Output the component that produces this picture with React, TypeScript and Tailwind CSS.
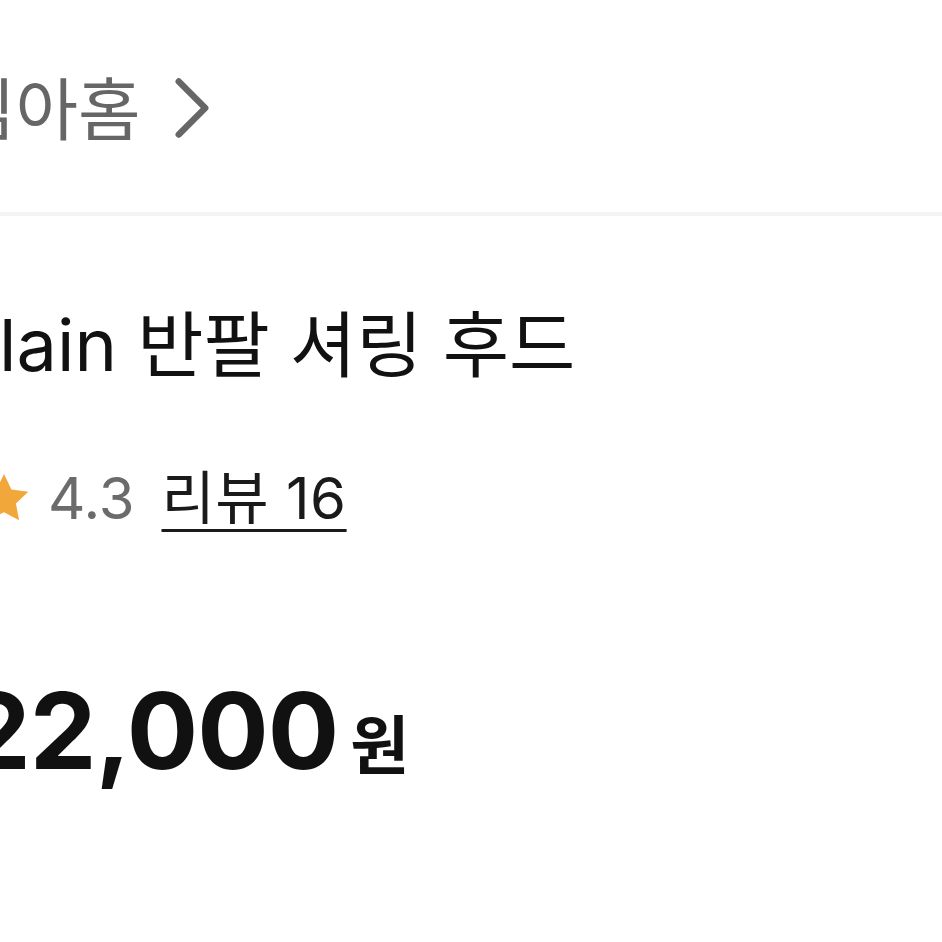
import { ChevronRight } from "lucide-react";

const FONT = "font-['Inter','Noto_Sans_CJK_KR',sans-serif]";

function Star() {
  return (
    <svg width="54" height="52" viewBox="0 0 24 23" className="-ml-[23px] shrink-0">
      <path
        d="M12 0.8l3.3 6.9 7.5 1-5.5 5.2 1.4 7.5L12 17.8l-6.7 3.6 1.4-7.5L1.2 8.7l7.5-1z"
        fill="#F2A73B"
      />
    </svg>
  );
}

export default function App() {
  return (
    <div className={`w-[942px] h-[942px] bg-white overflow-hidden ${FONT}`}>
      {/* shop link */}
      <div className="h-[212px] pt-[70px]">
        <div className="flex items-center -ml-[47px] h-[80px] text-[68px] leading-[80px] text-[#666666] whitespace-nowrap">
          <span>심아홈</span>
          <ChevronRight size={106} strokeWidth={1.45} className="-ml-[2px] -mt-[4px] shrink-0 text-[#666666]" />
        </div>
      </div>
      <div className="h-[4px] bg-[#f4f4f4]" />

      {/* title */}
      <div className="mt-[87px] -ml-[45px] text-[72px] leading-[84px] text-[#111111] whitespace-nowrap">
        plain 반팔 셔링 후드
      </div>

      {/* rating */}
      <div className="mt-[76px] flex items-center text-[58px] leading-[70px] whitespace-nowrap">
        <Star />
        <span className="ml-[17px] text-[#6b6b6b]">4.3</span>
        <span className="ml-[27px] text-[#1a1a1a] underline decoration-[3px] underline-offset-[10px] tracking-[0.5px]">
          리뷰 16
        </span>
      </div>

      {/* price */}
      <div className="mt-[138px] -ml-[36px] flex items-baseline whitespace-nowrap text-[#111111]">
        <span className="text-[106px] leading-[120px] font-bold tracking-[-1px]">22,000</span>
        <span className="ml-[12px] text-[64px] font-bold">원</span>
      </div>
    </div>
  );
}
